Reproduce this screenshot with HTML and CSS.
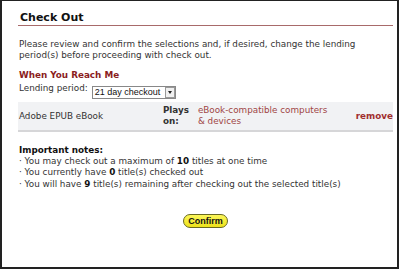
FILE: index.html
```html
<!DOCTYPE html>
<html lang="en">
<head>
<meta charset="utf-8">
<title>Check Out</title>
<link rel="stylesheet" href="styles.css">
</head>
<body>
<div class="marco">
  <div class="contenido">
    <h1 class="titulo">Check Out</h1>
    <p class="intro">Please review and confirm the selections and, if desired, change the lending period(s) before proceeding with check out.</p>
    <h2 class="seccion">When You Reach Me</h2>
    <div class="prestamo">
      <span>Lending period:</span>
      <span class="selector"><span class="valor">21 day checkout</span><span class="flecha"></span></span>
    </div>
    <div class="fila">
      <div class="formato">Adobe EPUB eBook</div>
      <div class="plays">Plays<br>on:</div>
      <div class="dispositivos">eBook-compatible computers<br>&amp; devices</div>
      <div class="quitar">remove</div>
    </div>
    <div class="notas">
      <b>Important notes:</b><br>
      &middot; You may check out a maximum of <b>10</b> titles at one time<br>
      &middot; You currently have <b>0</b> title(s) checked out<br>
      &middot; You will have <b>9</b> title(s) remaining after checking out the selected title(s)
    </div>
    <div class="botones">
      <button class="confirmar">Confirm</button>
    </div>
  </div>
</div>
</body>
</html>
```

FILE: styles.css
```css
body{
	margin:0;
	background:#fff;
	font-family:"DejaVu Sans", Verdana, sans-serif;
	font-size:8.8px;
	color:#333;
}
.marco{
	width:395px;
	height:266px;
	border-top:1px solid #222;
	border-left:2px solid #222;
	border-right:2px solid #222;
	border-bottom:2px solid #222;
}
.contenido{
	padding:11px 4px 0 16px;
}
.titulo{
	margin:0;
	font-size:11px;
	color:#111;
	line-height:12px;
	padding-bottom:1px;
	border-bottom:1px solid #a86a6a;
	padding-left:2px;
}
.intro{
	margin:13px 0 0 1px;
	line-height:10.5px;
}
.seccion{
	margin:10px 0 0 1px;
	font-size:8.8px;
	color:#8b1d1d;
	line-height:11px;
}
.prestamo{
	display:flex;
	align-items:flex-start;
	gap:4px;
	margin:2px 0 0 1px;
	line-height:11px;
}
.selector{
	display:flex;
	align-items:center;
	border:1px solid #888;
	height:11px;
	margin-top:3px;
	padding-left:2px;
	font-family:"Liberation Sans", Arial, sans-serif;
	font-size:9px;
	color:#111;
}
.valor{
	width:70px;
}
.flecha{
	width:8px;
	height:9px;
	border:1px solid #999;
	background:#f0f0f0;
	position:relative;
}
.flecha::after{
	content:"";
	position:absolute;
	left:2px;
	top:3px;
	border-left:2px solid transparent;
	border-right:2px solid transparent;
	border-top:3px solid #222;
}
.fila{
	display:flex;
	align-items:center;
	background:#f1f2f4;
	border-bottom:2px solid #d6d6d8;
	margin-top:3px;
	height:28px;
	padding-left:1px;
}
.formato{
	width:144px;
}
.plays{
	width:35px;
	font-weight:bold;
	line-height:11px;
}
.dispositivos{
	width:158px;
	color:#a04545;
	line-height:11px;
}
.quitar{
	font-weight:bold;
	color:#a02e2e;
}
.notas{
	margin:13px 0 0 1px;
	line-height:11.2px;
}
.notas b{
	color:#111;
}
.botones{
	text-align:center;
	margin-top:24px;
}
.confirmar{
	font-family:"Liberation Sans", Arial, sans-serif;
	font-weight:bold;
	font-size:9px;
	color:#111;
	background:linear-gradient(#fbf65a, #eee21a);
	border:1px solid #6a6a20;
	border-radius:7px;
	padding:1px 4px;
	height:14px;
	line-height:10px;
}
```
